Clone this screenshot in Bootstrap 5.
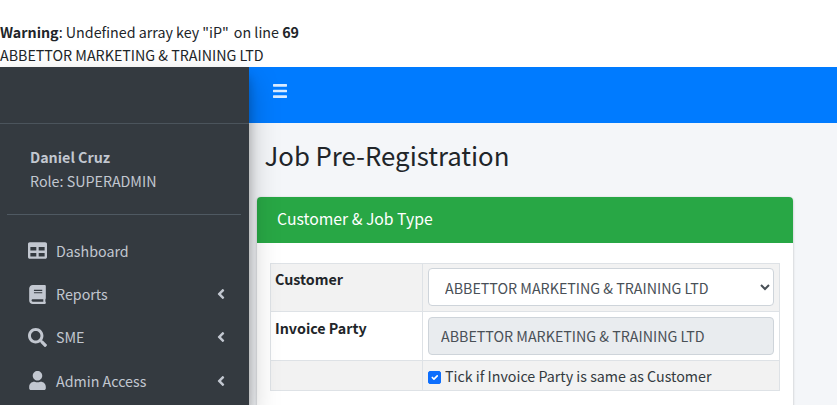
<!DOCTYPE html>
<html lang="en">
<head>
<meta charset="utf-8">
<title>Job Pre-Registration</title>
<link href="https://cdn.jsdelivr.net/npm/bootstrap@5.3.0/dist/css/bootstrap.min.css" rel="stylesheet">
<style>
html,body{height:405px;overflow:hidden}
body{font-family:"Noto Sans CJK SC","Noto Sans",sans-serif;font-size:14.27px;line-height:24px;color:#212529;background:#fff;padding-top:20px}
.warn-line{height:23px}
.warn-line b{font-weight:700}
.warn-gap{margin-left:5px}
.app-shell{height:338px}
.side-panel{width:249px;flex:none;background:#343a40;color:#c2c7d0;box-shadow:0 14px 28px rgba(0,0,0,.25),0 10px 10px rgba(0,0,0,.22);position:relative;z-index:2}
.brand-space{height:57px;border-bottom:1px solid #4b545c}
.user-box{margin:0 8px 0 7px;padding:21px 22px 21px 23px;border-bottom:1px solid #4f5962}
.user-box strong{display:block;font-weight:700}
.menu-wrap{padding-top:14px}
.menu-row{height:43.4px;padding:0 23px 0 28px;color:#c2c7d0;text-decoration:none}
.menu-row svg{fill:#c2c7d0;flex:none}
.menu-ico{width:19px;height:19px;margin-right:9px}
.menu-arrow{width:10px;height:16px}
.main-col{min-width:0;background:#f4f6f9;position:relative;z-index:1}
.top-bar{height:56px;background:#007bff;padding:0 24px 9px;position:relative;z-index:3}
.top-bar svg{width:14px;height:18px;fill:#fff;opacity:.85}
.page-title{font-size:25.75px;line-height:34px;font-weight:400;margin:0;padding:15px 15.5px 0}
.job-card{margin:25px 44px 0 8px;border:0;border-radius:4px;box-shadow:0 0 1px rgba(0,0,0,.125),0 1px 3px rgba(0,0,0,.2)}
.job-card .card-header{background:#28a745;color:#fff;height:46px;padding:0 20px;font-size:15.75px;line-height:44px;border:0;border-radius:4px 4px 0 0}
.job-card .card-body{padding:20px 13px 40px}
.job-table{margin:0;border-color:#dee2e6;color:#212529}
.job-table th{width:152px;padding:3px 4px;font-weight:700;vertical-align:top;line-height:24px}
.job-table td{padding:4px 5px 5px}
.job-table tr:nth-child(2) td{padding:5px}
.job-table tr:nth-child(2) th{padding-top:4px}
.shade-row{--bs-table-bg:#f2f2f2}
.job-table .form-select,.job-table .form-control{height:38px;font-family:inherit;font-size:14.27px;line-height:24px;color:#495057;border-color:#ced4da;border-radius:4px}
.job-table .form-select{padding:6px 12px;appearance:auto;-webkit-appearance:auto;background-image:none;background-color:#fff}
.job-table .form-control{padding:5px 12px 7px;background:#e9ecef}
.job-table tr.tick-row td,.job-table tr.tick-row th{padding:3px 5px 2px;line-height:24px;color:#343a40}
.tick-row .form-check-input{width:13px;height:13px;margin:0 4px 0 0;vertical-align:-2px;border-radius:2px}
</style>
</head>
<body>
<div class="warn-line"><b>Warning</b>: Undefined array key "iP"<span class="warn-gap">on line</span> <b>69</b></div>
<div>ABBETTOR MARKETING &amp; TRAINING LTD</div>
<div class="app-shell d-flex">
  <aside class="side-panel">
    <div class="brand-space"></div>
    <div class="user-box"><strong>Daniel Cruz</strong>Role: SUPERADMIN</div>
    <nav class="menu-wrap">
      <a class="menu-row d-flex align-items-center" href="#"><svg class="menu-ico" viewBox="0 0 512 512"><path d="M464 32H48C21.49 32 0 53.49 0 80v352c0 26.51 21.49 48 48 48h416c26.51 0 48-21.49 48-48V80c0-26.51-21.49-48-48-48zM224 416H64v-96h160v96zm0-160H64v-96h160v96zm224 160H288v-96h160v96zm0-160H288v-96h160v96z"/></svg>Dashboard</a>
      <a class="menu-row d-flex align-items-center" href="#"><svg class="menu-ico" viewBox="0 0 448 512"><path d="M448 360V24c0-13.3-10.7-24-24-24H96C43 0 0 43 0 96v320c0 53 43 96 96 96h328c13.3 0 24-10.7 24-24v-16c0-7.5-3.5-14.3-8.9-18.7-4.2-15.4-4.2-59.3 0-74.7 5.4-4.3 8.9-11.1 8.9-18.6zM128 134c0-3.3 2.7-6 6-6h212c3.3 0 6 2.7 6 6v20c0 3.3-2.7 6-6 6H134c-3.3 0-6-2.7-6-6v-20zm0 64c0-3.3 2.7-6 6-6h212c3.3 0 6 2.7 6 6v20c0 3.3-2.7 6-6 6H134c-3.3 0-6-2.7-6-6v-20zm253.4 250H96c-17.7 0-32-14.3-32-32 0-17.6 14.4-32 32-32h285.4c-1.9 17.1-1.9 46.9 0 64z"/></svg>Reports<svg class="menu-arrow ms-auto" viewBox="0 0 256 512"><path d="M31.7 239l136-136c9.4-9.4 24.6-9.4 33.9 0l22.6 22.6c9.4 9.4 9.4 24.6 0 33.9L127.9 256l96.4 96.4c9.4 9.4 9.4 24.6 0 33.9L201.7 409c-9.4 9.4-24.6 9.4-33.9 0l-136-136c-9.5-9.4-9.5-24.6-.1-34z"/></svg></a>
      <a class="menu-row d-flex align-items-center" href="#"><svg class="menu-ico" viewBox="0 0 512 512"><path d="M505 442.7L405.3 343c-4.5-4.5-10.6-7-17-7H372c27.6-35.3 44-79.7 44-128C416 93.1 322.9 0 208 0S0 93.1 0 208s93.1 208 208 208c48.3 0 92.7-16.4 128-44v16.3c0 6.4 2.5 12.5 7 17l99.7 99.7c9.4 9.4 24.6 9.4 33.9 0l28.3-28.3c9.4-9.4 9.4-24.6.1-34zM208 336c-70.7 0-128-57.2-128-128 0-70.7 57.2-128 128-128 70.7 0 128 57.2 128 128 0 70.7-57.2 128-128 128z"/></svg>SME<svg class="menu-arrow ms-auto" viewBox="0 0 256 512"><path d="M31.7 239l136-136c9.4-9.4 24.6-9.4 33.9 0l22.6 22.6c9.4 9.4 9.4 24.6 0 33.9L127.9 256l96.4 96.4c9.4 9.4 9.4 24.6 0 33.9L201.7 409c-9.4 9.4-24.6 9.4-33.9 0l-136-136c-9.5-9.4-9.5-24.6-.1-34z"/></svg></a>
      <a class="menu-row d-flex align-items-center" href="#"><svg class="menu-ico" viewBox="0 0 448 512"><path d="M224 256c70.7 0 128-57.3 128-128S294.7 0 224 0 96 57.3 96 128s57.3 128 128 128zm89.6 32h-16.7c-22.2 10.2-46.9 16-72.9 16s-50.6-5.8-72.9-16h-16.7C60.2 288 0 348.2 0 422.4V464c0 26.5 21.5 48 48 48h352c26.5 0 48-21.5 48-48v-41.6c0-74.2-60.2-134.4-134.4-134.4z"/></svg>Admin Access<svg class="menu-arrow ms-auto" viewBox="0 0 256 512"><path d="M31.7 239l136-136c9.4-9.4 24.6-9.4 33.9 0l22.6 22.6c9.4 9.4 9.4 24.6 0 33.9L127.9 256l96.4 96.4c9.4 9.4 9.4 24.6 0 33.9L201.7 409c-9.4 9.4-24.6 9.4-33.9 0l-136-136c-9.5-9.4-9.5-24.6-.1-34z"/></svg></a>
    </nav>
  </aside>
  <div class="main-col flex-grow-1">
    <div class="top-bar d-flex align-items-center"><svg viewBox="0 0 448 512" preserveAspectRatio="none"><path d="M16 132h416c8.837 0 16-7.163 16-16V76c0-8.837-7.163-16-16-16H16C7.163 60 0 67.163 0 76v40c0 8.837 7.163 16 16 16zm0 160h416c8.837 0 16-7.163 16-16v-40c0-8.837-7.163-16-16-16H16c-8.837 0-16 7.163-16 16v40c0 8.837 7.163 16 16 16zm0 160h416c8.837 0 16-7.163 16-16v-40c0-8.837-7.163-16-16-16H16c-8.837 0-16 7.163-16 16v40c0 8.837 7.163 16 16 16z"/></svg></div>
    <h1 class="page-title">Job Pre-Registration</h1>
    <div class="card job-card">
      <div class="card-header">Customer &amp; Job Type</div>
      <div class="card-body">
        <table class="table table-bordered job-table">
          <tbody>
            <tr class="shade-row"><th>Customer</th><td><select class="form-select"><option>ABBETTOR MARKETING &amp; TRAINING LTD</option></select></td></tr>
            <tr><th>Invoice Party</th><td><input class="form-control" type="text" readonly value="ABBETTOR MARKETING &amp; TRAINING LTD"></td></tr>
            <tr class="shade-row tick-row"><th></th><td><input class="form-check-input" type="checkbox" checked id="same"><label for="same">Tick if Invoice Party is same as Customer</label></td></tr>
          </tbody>
        </table>
      </div>
    </div>
  </div>
</div>
<script src="https://cdn.jsdelivr.net/npm/bootstrap@5.3.0/dist/js/bootstrap.bundle.min.js"></script>
</body>
</html>
